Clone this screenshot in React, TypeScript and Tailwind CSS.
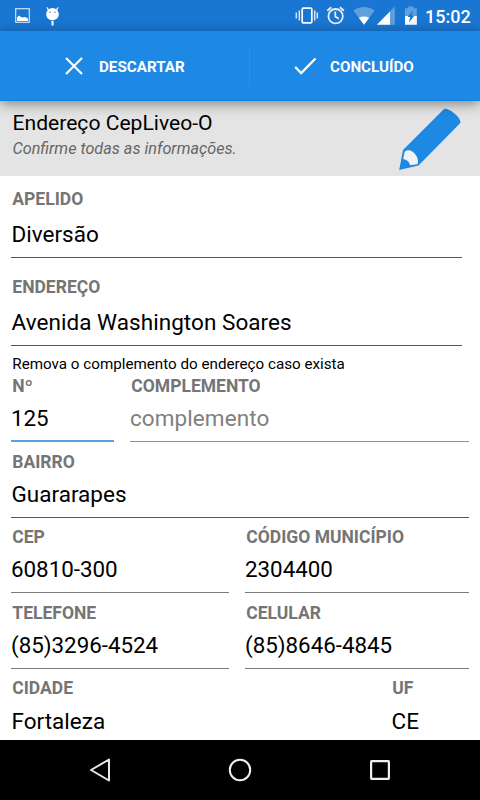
import React from "react";

type FieldProps = {
  label: string;
  value: string;
  className?: string;
  gap?: string;
  line?: string;
  tone?: string;
  size?: string;
};

function Field({ label, value, className = "", gap = "mt-[6px]", line = "h-px bg-[#7c7c7c]", tone = "text-black", size = "pl-[0.5px] text-[22.5px]" }: FieldProps) {
  return (
    <div className={`flex flex-col ${className}`}>
      <div className="h-5 pl-[1.3px] text-[17.5px] leading-[18px] font-bold text-[#757575]">{label}</div>
      <div className={`h-[30px] leading-[30px] ${size} ${gap} ${tone}`}>{value}</div>
      <div className="flex h-[9px] flex-col justify-end">
        <div className={line} />
      </div>
    </div>
  );
}

const numeric = "text-[22.35px]";

function StatusBar() {
  return (
    <div className="flex h-[31px] shrink-0 bg-[#1976d2]">
      <svg width="420" height="31" viewBox="0 0 420 31" fill="none">
        <rect x="15.7" y="8.7" width="13.6" height="13.6" stroke="#cfe1f6" strokeWidth="1.2" />
        <path d="M17 21v-3.5l2-2 2 1.5 2 .5 2-.5 3 1.500v2.500z" fill="#fff" />
        <path d="M47 7l2 2.200a6 6 0 0 1 7 0L58 7l.6.5-1.400 2.800a6.300 6.300 0 0 1 1.600 4c0 3.500-2.800 6-6.300 6s-6.300-2.500-6.300-6c0-1.600.6-3 1.600-4L46.400 7.500zM51.500 21h2v4.500h-2z" fill="#fff" />
        <circle cx="50" cy="12.300" r=".7" fill="#1976d2" />
        <circle cx="55" cy="12.300" r=".7" fill="#1976d2" />
        <rect x="302.200" y="8.200" width="9.600" height="14.600" rx="1" stroke="#fff" strokeWidth="1.700" />
        <path d="M299.300 10.500v10M314.700 10.500v10" stroke="#d5e5f7" strokeWidth="1.500" />
        <path d="M296.300 12.500v6M317.300 12.500v6" stroke="#d5e5f7" strokeWidth="1.500" />
        <circle cx="335.600" cy="16.200" r="7.200" stroke="#e6f0fb" strokeWidth="1.800" />
        <path d="M335.300 11.500v5l3.500 2.300M327.300 10.700l4-3.400M343.900 10.700l-4-3.400" stroke="#e6f0fb" strokeWidth="1.800" />
        <path d="M353.300 10.500C359.500 5.700 368.500 5.700 374.700 10.500L364 24.700z" fill="#5e9fdf" />
        <path d="M358.800 17.800c3.200-1.700 7.200-1.700 10.400 0L364 24.700z" fill="#fff" />
        <path d="M394.500 7v17.700H377z" fill="#5e9fdf" />
        <path d="M390 11.500v13.200h-13.200z" fill="#fff" />
        <path d="M390.500 11l4.200-4.200v17.900h-4.200z" fill="#5e9fdf" />
        <path d="M405 8.200h3.300V6.500h5v1.700h3.500v16.500H405z" fill="#5e9fdf" />
        <path d="M405 16h11.800v8.700H405z" fill="#fff" />
        <path d="M413 10.500l-5.500 6.500h2.700l-1.200 5.500 5.300-6.800h-2.800z" fill="#1976d2" />
      </svg>
      <div className="pl-[5px] text-[18px] leading-[33px] font-medium text-white">15:02</div>
    </div>
  );
}

function Toolbar() {
  return (
    <div className="relative z-10 flex h-[70px] shrink-0 items-center border-b border-[#0c83ea] bg-[#1e88e5] text-[15.2px] font-bold text-white shadow-[0_3px_12px_rgba(0,0,0,0.42)]">
      <div className="flex h-full w-[249px] items-center pl-[65px]">
        <svg width="18" height="18" viewBox="0 0 18 18" fill="none" stroke="#fff" strokeWidth="2.200">
          <path d="M1 1l16 16M17 1L1 17" />
        </svg>
        <span className="ml-[16px] pt-[3px]">DESCARTAR</span>
      </div>
      <div className="h-[40px] w-px bg-[#3190e6]" />
      <div className="flex h-full flex-1 items-center pl-[44px]">
        <svg width="23" height="18" viewBox="0 0 23 18" fill="none" stroke="#fff" strokeWidth="2.300">
          <path d="M1.200 10l6 6L21.500 1.500" />
        </svg>
        <span className="ml-[13px] pt-[3px]">CONCLUÍDO</span>
      </div>
    </div>
  );
}

function Header() {
  return (
    <div className="flex h-[75px] shrink-0 bg-[#e4e4e4]">
      <div className="flex-1 pl-[12.5px] pt-[8px]">
        <div className="text-[21.1px] leading-[28px] text-black">Endereço CepLiveo-O</div>
        <div className="text-[16.2px] leading-[24px] text-[#666] italic">Confirme todas as informações.</div>
      </div>
      <svg className="mt-[4px] mr-[18px]" width="64" height="68" viewBox="398 105 64 68">
        <path d="M443.500 109.500C446.500 106 462 117.500 460.300 123L418.500 165.500 399.200 170 403 150z" fill="#1e88e5" />
        <path d="M404.600 151.800C406.500 149.800 410 149.500 413 152C417 155 419.300 161 417.300 164.200L410 165.200C409 161.500 407.500 160.300 403.200 159z" fill="#f2f2f2" />
      </svg>
    </div>
  );
}

function NavBar() {
  return (
    <div className="grid h-[60px] shrink-0 grid-cols-[100px_140px_140px_100px] bg-black">
      <svg className="ml-[50px]" width="100" height="60" viewBox="50 0 100 60" fill="none" stroke="#e8e8e8" strokeWidth="2" strokeLinejoin="round">
        <path d="M109 19.500v21L91 30z" />
      </svg>
      <svg className="ml-[90px]" width="100" height="60" viewBox="190 0 100 60" fill="none" stroke="#f0f0f0" strokeWidth="2">
        <circle cx="240" cy="30" r="10.200" />
      </svg>
      <svg className="ml-[90px]" width="100" height="60" viewBox="330 0 100 60" fill="none" stroke="#f0f0f0" strokeWidth="2.200">
        <rect x="371.100" y="21.100" width="17.800" height="17.800" rx=".6" />
      </svg>
    </div>
  );
}

export default function App() {
  return (
    <div className="flex h-[800px] w-[480px] flex-col overflow-hidden bg-white font-['Roboto',sans-serif]">
      <StatusBar />
      <Toolbar />
      <Header />
      <div className="flex min-h-0 flex-1 flex-col overflow-hidden pt-[14px] pr-[11px] pl-[11px]">
        <Field label="APELIDO" value="Diversão" gap="mt-[9px]" line="h-px bg-[#555]" className="mr-[7px]" />
        <Field label="ENDEREÇO" value="Avenida Washington Soares" gap="mt-[9px]" line="h-px bg-[#555]" className="mt-5 mr-[7px]" size="pl-[0.5px] text-[22.5px] tracking-[0.05px]" />
        <div className="mt-2 h-5 pl-[1.3px] text-[15.200px] leading-5 text-black">Remova o complemento do endereço caso exista</div>
        <div className="mt-[3px] grid grid-cols-[103px_339px] gap-x-4">
          <Field label="Nº" value="125" line="h-[2px] bg-[#5c9ee0]" size={numeric} />
          <Field label="COMPLEMENTO" value="complemento" tone="text-[#808080]" line="h-px bg-[#909090]" size="text-[22.5px] tracking-[0.08px]" />
        </div>
        <Field label="BAIRRO" value="Guararapes" className="mt-[11px]" line="h-px bg-[#555]" />
        <div className="mt-[10px] grid grid-cols-[218px_224px] gap-x-4">
          <Field label="CEP" value="60810-300" size={numeric} />
          <Field label="CÓDIGO MUNICÍPIO" value="2304400" size={numeric} />
        </div>
        <div className="mt-[11px] grid grid-cols-[218px_224px] gap-x-4">
          <Field label="TELEFONE" value="(85)3296-4524" size={numeric} />
          <Field label="CELULAR" value="(85)8646-4845" size={numeric} />
        </div>
        <div className="mt-[10px] grid grid-cols-[364px_78px] gap-x-4">
          <Field label="CIDADE" value="Fortaleza" gap="mt-[7px]" />
          <Field label="UF" value="CE" gap="mt-[7px]" />
        </div>
      </div>
      <NavBar />
    </div>
  );
}
